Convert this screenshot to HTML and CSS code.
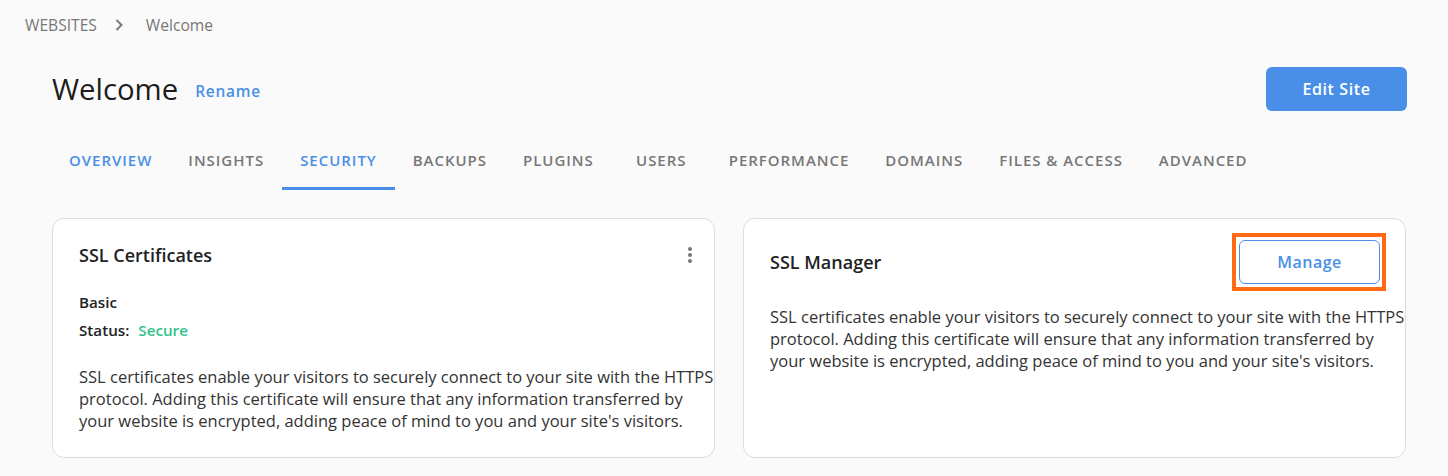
FILE: index.html
```html
<!DOCTYPE html>
<html lang="en">
<head>
    <meta charset="UTF-8">
    <meta name="viewport" content="width=device-width, initial-scale=1.0">
    <title>Welcome - Security</title>
    <link rel="stylesheet" href="styles.css">
</head>
<body>
    <!-- breadcrumb -->
    <nav class="breadcrumb">
        <a href="#" class="crumb">WEBSITES</a>
        <svg class="crumb-sep" width="10" height="14" viewBox="0 0 10 14">
            <path d="M2.5 2 L7.5 7 L2.5 12" fill="none" stroke="#7a7a7a" stroke-width="2"/>
        </svg>
        <span class="crumb current">Welcome</span>
    </nav>

    <main class="main">
        <div class="site-header">
            <div class="site-title">
                <h1>Welcome</h1>
                <a href="#" class="rename">Rename</a>
            </div>
            <button class="btn-primary">Edit Site</button>
        </div>

        <div class="tabs">
            <a href="#" class="tab overview">OVERVIEW</a>
            <a href="#" class="tab">INSIGHTS</a>
            <a href="#" class="tab active">SECURITY</a>
            <a href="#" class="tab">BACKUPS</a>
            <a href="#" class="tab">PLUGINS</a>
            <a href="#" class="tab wide">USERS</a>
            <a href="#" class="tab">PERFORMANCE</a>
            <a href="#" class="tab">DOMAINS</a>
            <a href="#" class="tab">FILES &amp; ACCESS</a>
            <a href="#" class="tab">ADVANCED</a>
        </div>

        <div class="cards">
            <!-- SSL certificates -->
            <section class="card">
                <div class="card-head">
                    <h2>SSL Certificates</h2>
                    <button class="kebab" aria-label="More">
                        <svg width="6" height="18" viewBox="0 0 6 18">
                            <circle cx="3" cy="3" r="2" fill="#777"/>
                            <circle cx="3" cy="9" r="2" fill="#777"/>
                            <circle cx="3" cy="15" r="2" fill="#777"/>
                        </svg>
                    </button>
                </div>
                <div class="cert-info">
                    <p class="cert-type">Basic</p>
                    <p class="cert-status">Status: <span class="secure">Secure</span></p>
                </div>
                <p class="card-text">SSL certificates enable your visitors to securely connect to your site with the HTTPS protocol. Adding this certificate will ensure that any information transferred by your website is encrypted, adding peace of mind to you and your site's visitors.</p>
            </section>

            <!-- SSL manager -->
            <section class="card manager">
                <div class="card-head">
                    <h2>SSL Manager</h2>
                    <span class="highlight">
                        <button class="btn-outline">Manage</button>
                    </span>
                </div>
                <p class="card-text">SSL certificates enable your visitors to securely connect to your site with the HTTPS protocol. Adding this certificate will ensure that any information transferred by your website is encrypted, adding peace of mind to you and your site's visitors.</p>
            </section>
        </div>
    </main>
</body>
</html>
```

FILE: styles.css
```css
body {
    margin: 0;
    font-family: 'Open Sans', 'Liberation Sans', Arial, sans-serif;
    background-color: #fafafa;
    color: #222;
}

a {
    text-decoration: none;
}

button {
    font-family: inherit;
    cursor: pointer;
}

/* breadcrumb */
.breadcrumb {
    display: flex;
    align-items: center;
    padding: 15px 25px;
    line-height: 20px;
}

.crumb {
    font-size: 15.6px;
    color: #777;
}

.crumb-sep {
    margin: 0 22px 0 17px;
}

/* main */
.main {
    padding: 0 41px 0 52px;
}

.site-header {
    display: flex;
    align-items: center;
    justify-content: space-between;
    margin-top: 17px;
}

.site-title {
    display: flex;
    align-items: center;
}

.site-title h1 {
    margin: 0;
    font-size: 29.3px;
    font-weight: 400;
    line-height: 40px;
    color: #1d1d1d;
}

.rename {
    margin-left: 17px;
    margin-top: 4px;
    font-size: 15.4px;
    font-weight: 600;
    letter-spacing: 0.8px;
    color: #4a8fe7;
}

.btn-primary {
    width: 141px;
    height: 44px;
    border: none;
    border-radius: 6px;
    background-color: #4a8fe7;
    color: #fff;
    font-size: 16px;
    font-weight: 600;
    letter-spacing: 0.6px;
}

/* tabs */
.tabs {
    display: flex;
    margin-top: 22px;
}

.tab {
    padding: 17px 18px 17px;
    border-bottom: 3px solid transparent;
    font-size: 15px;
    font-weight: 600;
    line-height: 20px;
    letter-spacing: 0.97px;
    color: #777;
    text-align: center;
}

.tab.overview {
    margin-left: -1px;
    color: #4a8fe7;
}

.tab.wide {
    min-width: 63px;
}

.tab.active {
    color: #4a8fe7;
    border-bottom-color: #4a8fe7;
}

/* cards */
.cards {
    display: grid;
    grid-template-columns: 1fr 1fr;
    gap: 28px;
    margin-top: 28px;
    margin-right: 1px;
}

.card {
    background-color: #fff;
    border: 1px solid #dcdcdc;
    border-radius: 12px;
    padding: 24px 26px 25px;
    height: 240px;
    box-sizing: border-box;
}

.card-head {
    display: flex;
    align-items: center;
    justify-content: space-between;
}

.card-head h2 {
    margin: 0;
    font-size: 18px;
    font-weight: 600;
    line-height: 24px;
    color: #222;
}

.kebab {
    display: flex;
    padding: 0;
    margin-right: -5px;
    border: none;
    background: none;
}

.cert-info {
    margin-top: 25px;
}

.cert-info p {
    margin: 0;
    font-size: 15.2px;
    font-weight: 600;
    line-height: 20px;
    color: #222;
}

.cert-info .cert-status {
    margin-top: 8px;
}

.secure {
    margin-left: 5px;
    color: #2fc48a;
}

.card-text {
    margin: 26px -30px 0 0;
    font-size: 16.5px;
    line-height: 22px;
    color: #333;
}

.card.manager {
    padding-top: 21px;
}

.card.manager .card-text {
    margin-top: 22px;
}

.btn-outline {
    display: block;
    width: 141px;
    height: 44px;
    border: 1px solid #4a8fe7;
    border-radius: 6px;
    background-color: #fff;
    color: #4a8fe7;
    font-size: 16px;
    font-weight: 600;
    letter-spacing: 0.5px;
}

/* orange highlight around the manage button */
.highlight {
    display: block;
    margin: -7px -7px -7px 0;
    padding: 3px 2px 3px 3px;
    border: 4px solid #ff6a13;
}
```
